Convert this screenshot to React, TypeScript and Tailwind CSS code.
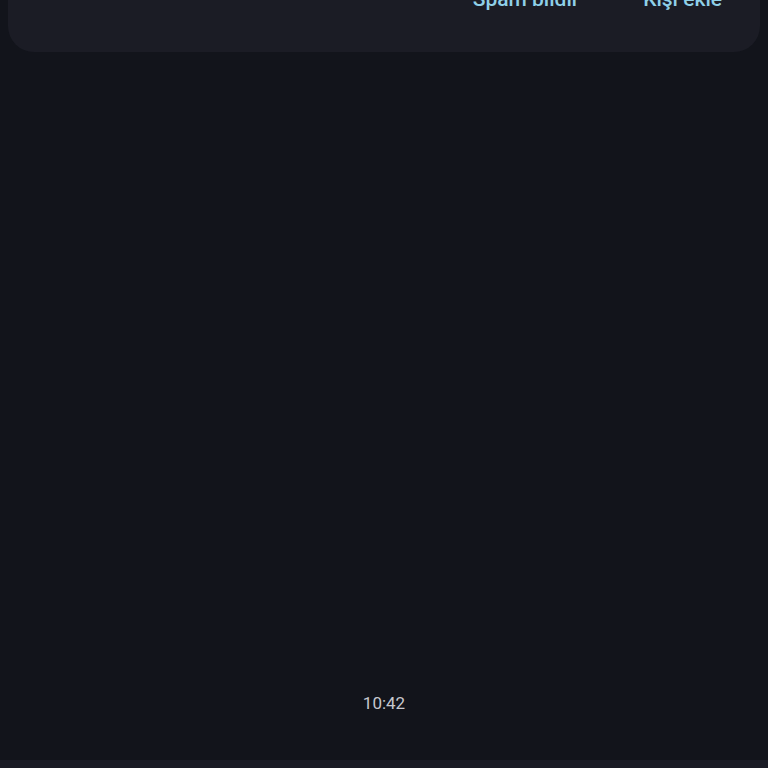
import React from 'react';

// ─── Component ────────────────────────────────────────────────────────────────

const App: React.FC = () => {
    return (
        <div className="h-[768px] w-full overflow-hidden bg-[#12141b] flex flex-col font-['Roboto',sans-serif]">

            {/* ── Top sheet (scrolled) ── */}
            <div className="mx-2 -mt-[40px] h-[92px] rounded-b-[26px] bg-[#1b1c25] pt-[25px] pr-[38px] flex items-start justify-end gap-[64px] shrink-0">
                <button className="text-[21px] leading-[28px] font-medium text-[#8fd0e8]">Spam bildir</button>
                <button className="text-[21px] leading-[28px] font-medium text-[#8fd0e8]">Kişi ekle</button>
            </div>

            {/* ── Empty chat area ── */}
            <div className="flex-1" />

            {/* ── Timestamp ── */}
            <div className="h-[24px] text-center text-[17px] leading-[24px] text-[#c6c8ce]">10:42</div>

            <div className="h-[45px] shrink-0" />

            {/* ── Bottom bar ── */}
            <div className="h-[8px] shrink-0 bg-[#1a1b25]" />
        </div>
    );
};

export default App;
